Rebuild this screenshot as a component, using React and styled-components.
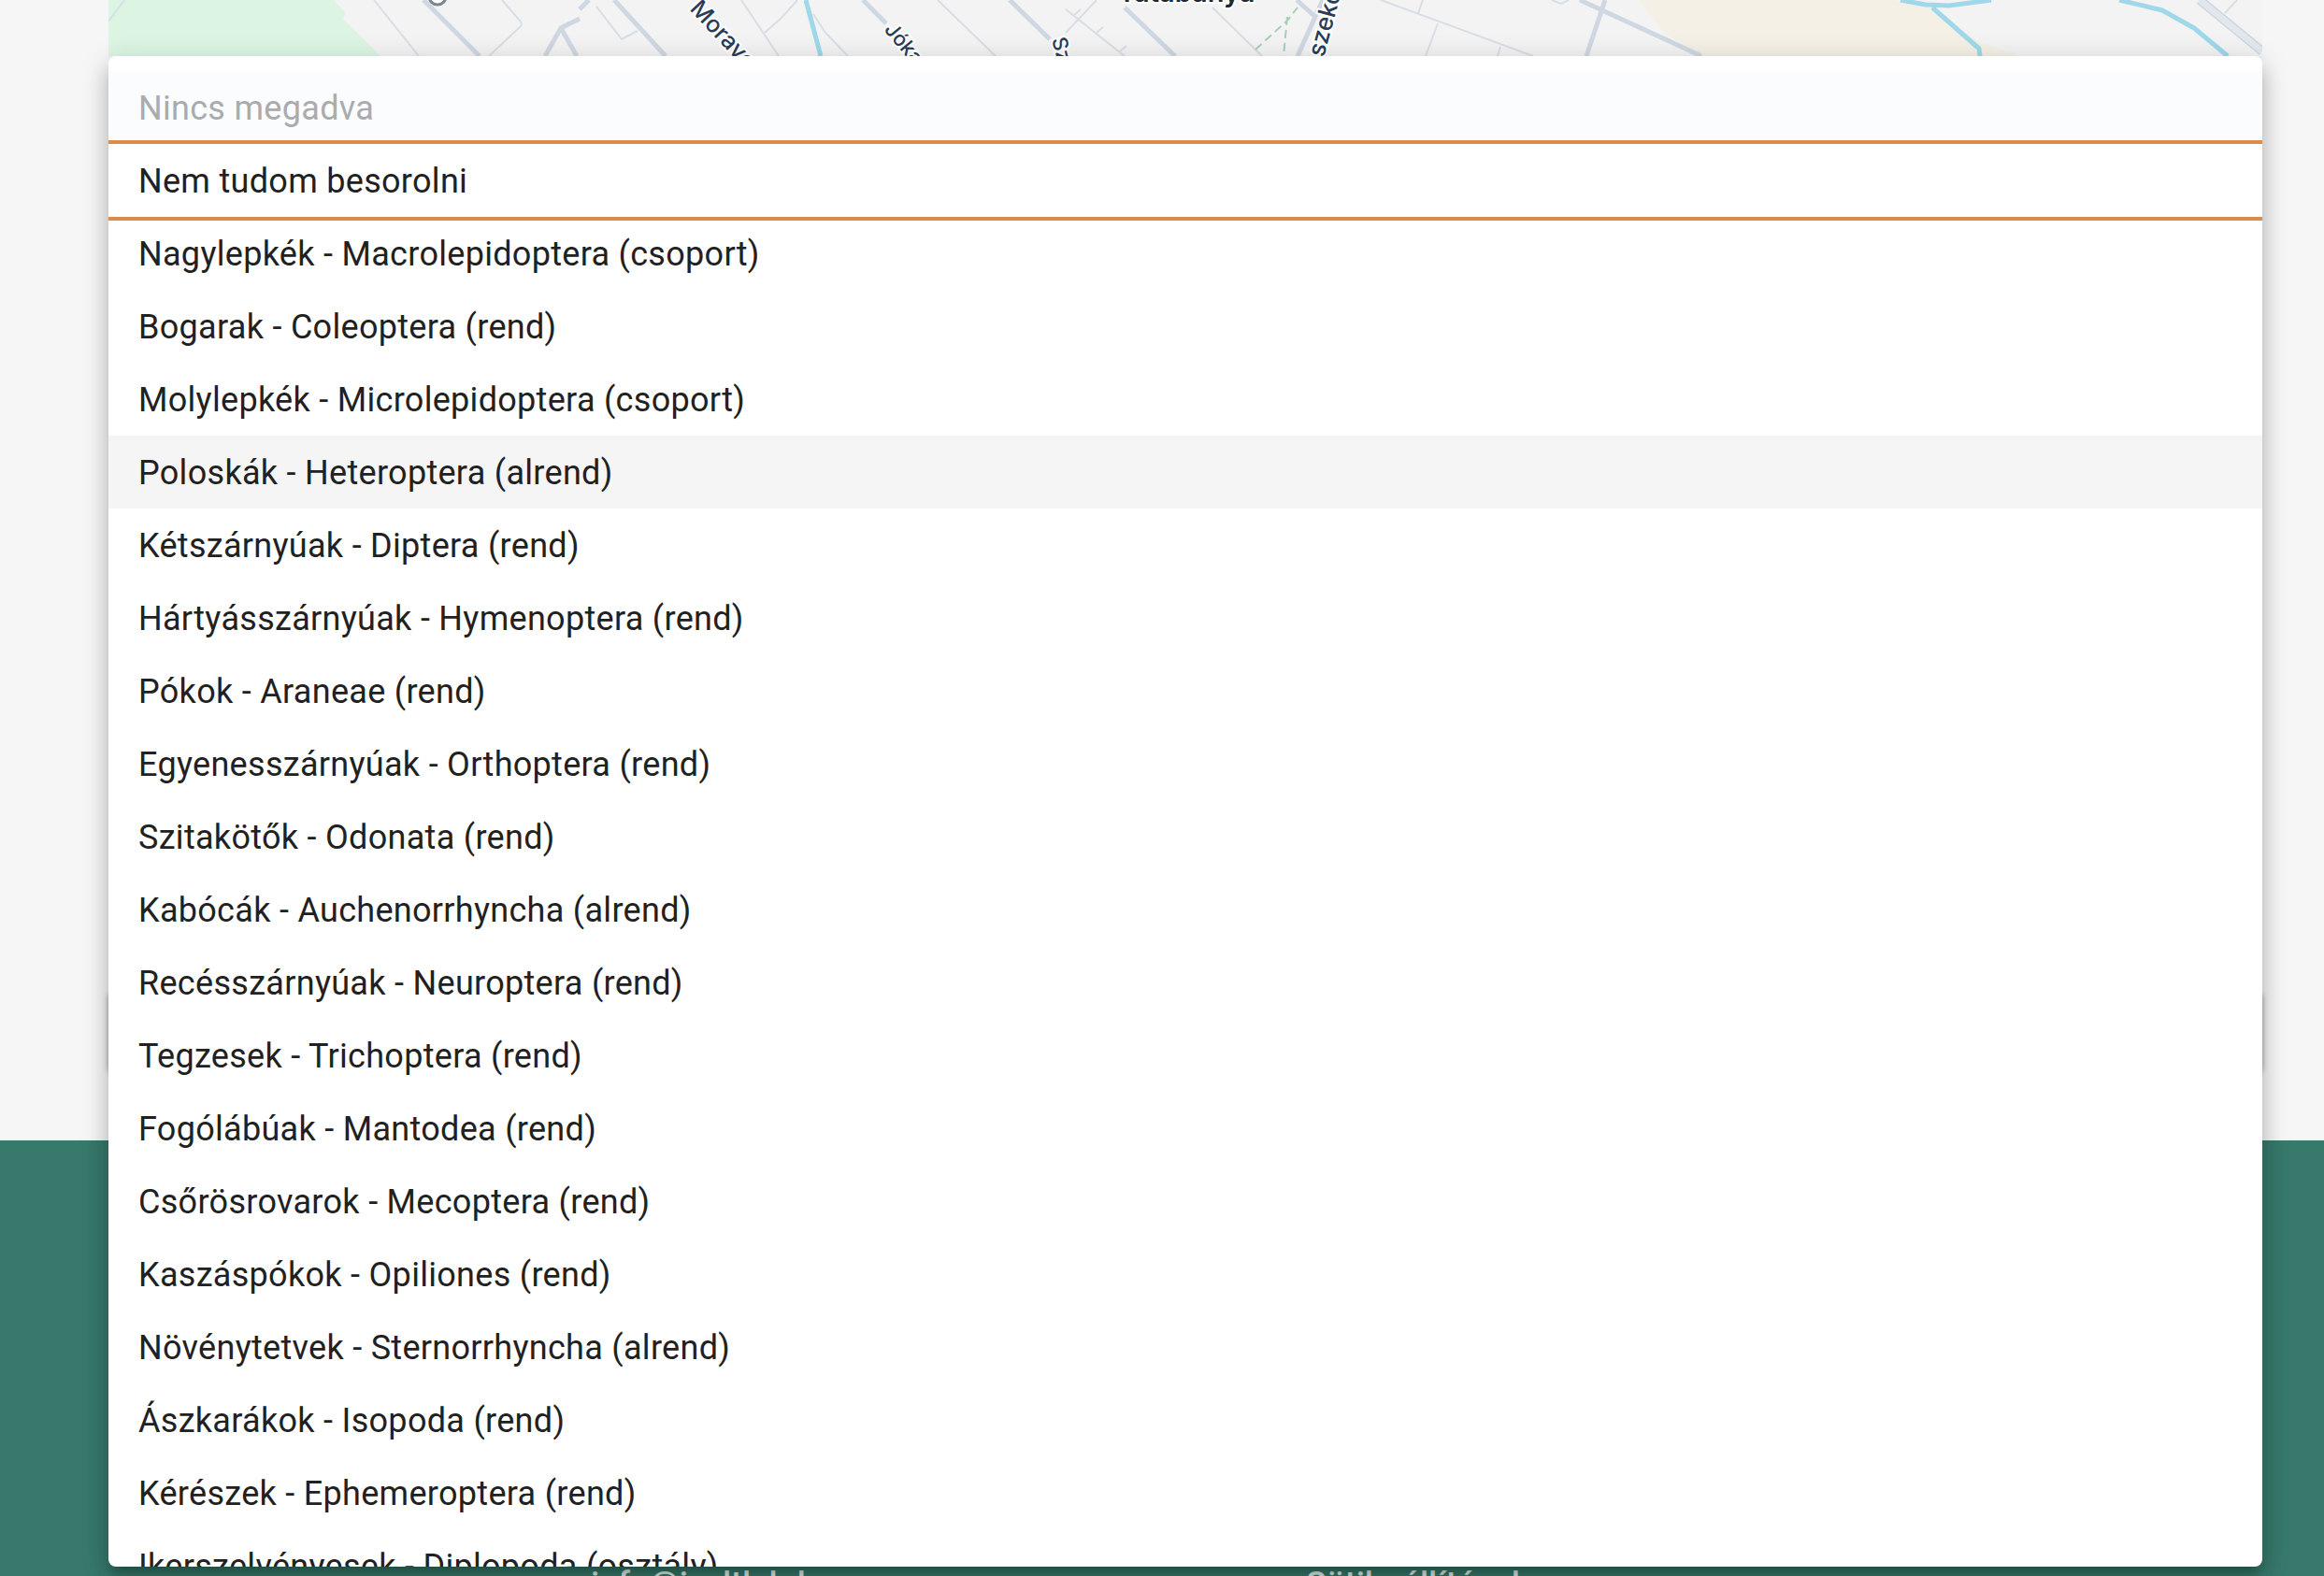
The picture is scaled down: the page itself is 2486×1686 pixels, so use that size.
import React from 'react';
import styled, { createGlobalStyle } from 'styled-components';

const GlobalStyle = createGlobalStyle`
  html, body {
    margin: 0;
    padding: 0;
    height: 100%;
    overflow: hidden;
    background: #f6f6f6;
    font-family: Roboto, "Liberation Sans", sans-serif;
  }
`

const Page = styled.div`
  position: relative;
  width: 2486px;
  height: 1686px;
  overflow: hidden;
`

const Main = styled.main`
  height: 1220px;
  box-sizing: border-box;
  padding: 0 66px 0 116px;
  background: #f6f6f6;
`

const MapBox = styled.div`
  height: 1000px;
  overflow: hidden;
  background: #f4f3f3;
  svg { display: block; }
`

const FieldCard = styled.div`
  margin-top: 64px;
  height: 82px;
  background: #fff;
  box-shadow: 0 0 6px rgba(0, 0, 0, 0.35);
`

const Footer = styled.footer`
  height: 466px;
  box-sizing: border-box;
  padding: 454px 0 0 632px;
  display: grid;
  grid-template-columns: 765px 1fr;
  background: #37796b;
`

const FooterLink = styled.a`
  font-size: 36px;
  font-weight: 500;
  color: #dcebe7;
  text-decoration: none;
`

const Menu = styled.ul`
  position: absolute;
  top: 60px;
  left: 116px;
  width: 2304px;
  height: 1616px;
  margin: 0;
  padding: 16px 0 0;
  box-sizing: border-box;
  list-style: none;
  overflow: hidden;
  background: #fff;
  border-radius: 8px;
  box-shadow: 0 10px 10px -6px rgba(0, 0, 0, 0.2), 0 16px 20px 2px rgba(0, 0, 0, 0.14), 0 6px 28px 4px rgba(0, 0, 0, 0.12);
`

const edgeShadow = { top: 'inset 0 4px 0 #dd8b4b', bottom: 'inset 0 -4px 0 #dd8b4b' };

const Option = styled.li`
  flex: none;
  height: 78px;
  line-height: 80px;
  padding: 0 32px;
  font-size: 36px;
  letter-spacing: 0.3px;
  color: ${p => (p.$placeholder ? '#a9abad' : '#212121')};
  background: ${p => (p.$placeholder ? '#fafcfd' : p.$hover ? '#f5f5f5' : 'transparent')};
  box-shadow: ${p => edgeShadow[p.$edge] || 'none'};
`

const options = [
  'Nagylepkék - Macrolepidoptera (csoport)',
  'Bogarak - Coleoptera (rend)',
  'Molylepkék - Microlepidoptera (csoport)',
  'Poloskák - Heteroptera (alrend)',
  'Kétszárnyúak - Diptera (rend)',
  'Hártyásszárnyúak - Hymenoptera (rend)',
  'Pókok - Araneae (rend)',
  'Egyenesszárnyúak - Orthoptera (rend)',
  'Szitakötők - Odonata (rend)',
  'Kabócák - Auchenorrhyncha (alrend)',
  'Recésszárnyúak - Neuroptera (rend)',
  'Tegzesek - Trichoptera (rend)',
  'Fogólábúak - Mantodea (rend)',
  'Csőrösrovarok - Mecoptera (rend)',
  'Kaszáspókok - Opiliones (rend)',
  'Növénytetvek - Sternorrhyncha (alrend)',
  'Ászkarákok - Isopoda (rend)',
  'Kérészek - Ephemeroptera (rend)',
  'Ikerszelvényesek - Diplopoda (osztály)',
];

const thinRoads = [
  'M116 23L133 0', 'M400 0L448 60', 'M537 0L557 23Q559 26 556 29L523 60',
  'M638 7L665 42L682 33', 'M793 0L833 60', 'M818 35L837 18L853 0',
  'M870 15L883 35L907 60', 'M1003 0L1065 60', 'M1173 0L1140 35',
  'M1140 10L1203 60', 'M1148 17L1156 10', 'M1173 35L1180 29', 'M1198 55L1205 49',
  'M1297 8L1350 60', 'M1477 0L1640 60', 'M1522 0L1517 14', 'M1538 25L1525 60',
  'M1605 50L1602 60', 'M1660 0L1670 4L1678 0', 'M2393 0L2380 14',
];

const thickRoads = [
  'M453 0L513 60', 'M620 20L600 30L583 60', 'M600 30L617 60', 'M620 10L630 0',
  'M657 0L712 60', 'M923 0L948 25', 'M1080 0L1123 42', 'M1203 8L1257 60',
  'M1387 0L1407 18', 'M1415 0L1388 60', 'M1690 0L1820 60', 'M1717 0L1697 60',
];

const rivers = [
  'M862 0L878 60', 'M2033 0L2060 5L2085 6L2130 0', 'M2067 8L2117 52L2118 60',
  'M2267 0L2313 11L2347 30L2383 60',
];

const streetLabel = {
  fontFamily: 'Inter, Roboto, sans-serif',
  fontWeight: 500,
  fill: '#2b3d56',
  stroke: '#fff',
  strokeWidth: 4,
  paintOrder: 'stroke',
};

// only the top 60px of the map is visible above the menu
const MapDrawing = () => (
  <svg width="2304" height="60" viewBox="116 0 2304 60">
    <path d="M116 0H357L370 14L367 20L407 60H116Z" fill="#dcf5e3" />
    <path d="M1753 0L1780 35L1820 60H2160L2117 45L2065 8L2025 0Z" fill="#f5f0e6" />
    <g fill="none" stroke="#d8dee6" strokeWidth="2">
      {thinRoads.map(d => <path key={d} d={d} />)}
    </g>
    <g fill="none" stroke="#cfd8e2" strokeWidth="5">
      {thickRoads.map(d => <path key={d} d={d} />)}
    </g>
    <path d="M2353 0L2420 55" fill="none" stroke="#cfd6df" strokeWidth="10" />
    <path d="M2353 0L2420 55" fill="none" stroke="#e2e7ee" strokeWidth="7" />
    <g fill="none" stroke="#9ed8ea" strokeWidth="5" strokeLinejoin="round">
      {rivers.map(d => <path key={d} d={d} />)}
    </g>
    <path d="M1343 53L1377 22L1388 8M1377 18L1373 60" fill="none" stroke="#a9cfb6" strokeWidth="2" strokeDasharray="9 5" />
    <circle cx="468" cy="-4" r="9" fill="#fff" stroke="#7a8592" strokeWidth="3" />
    <text x="737" y="10" fontSize="25" transform="rotate(47 737 10)" style={streetLabel}>Moravcsik</text>
    <text x="945" y="32" fontSize="22" transform="rotate(50 945 32)" style={streetLabel}>Jókai</text>
    <text x="1125" y="42" fontSize="22" transform="rotate(75 1125 42)" style={streetLabel}>Sz</text>
    <text x="1416" y="62" fontSize="26" transform="rotate(-75 1416 62)" style={streetLabel}>szekő</text>
    <text x="1196" y="2" fontSize="29" style={{ ...streetLabel, fontWeight: 600, fill: '#1f2733' }}>Tatabánya</text>
  </svg>
);

const App = () => (
  <Page>
    <GlobalStyle />
    <Main>
      <MapBox>
        <MapDrawing />
      </MapBox>
      <FieldCard />
    </Main>
    <Footer>
      <FooterLink>info@izeltlab.hu</FooterLink>
      <FooterLink>Sütibeállítások</FooterLink>
    </Footer>
    <Menu>
      <Option $placeholder $edge="bottom">Nincs megadva</Option>
      <Option>Nem tudom besorolni</Option>
      {options.map((label, i) => (
        <Option key={label} $hover={label.startsWith('Poloskák')} $edge={i === 0 ? 'top' : undefined}>
          {label}
        </Option>
      ))}
    </Menu>
  </Page>
);

export default App;
